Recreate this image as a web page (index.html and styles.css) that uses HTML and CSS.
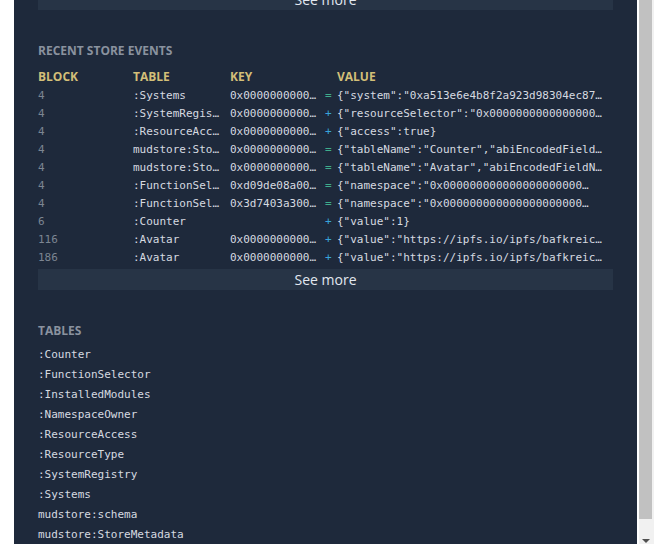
FILE: index.html
```html
<!DOCTYPE html>
<html lang="en">
<head>
<meta charset="utf-8">
<title>Store events</title>
<link rel="stylesheet" href="styles.css">
</head>
<body>
<div class="viewport">
  <div class="panel">
    <button class="see-more see-more-top">See more</button>

    <section class="section">
      <h2 class="section-title">Recent store events</h2>
      <div class="events">
        <div class="ev-head">BLOCK</div><div class="ev-head">TABLE</div><div class="ev-head">KEY</div><div class="ev-head"></div><div class="ev-head">VALUE</div>

        <div class="ev-block">4</div><div class="ev-cell">:Systems</div><div class="ev-cell">0x0000000000…</div><div class="sign eq">=</div><div class="ev-cell">{"system":"0xa513e6e4b8f2a923d98304ec87…</div>
        <div class="ev-block">4</div><div class="ev-cell">:SystemRegis…</div><div class="ev-cell">0x0000000000…</div><div class="sign plus">+</div><div class="ev-cell">{"resourceSelector":"0x0000000000000000…</div>
        <div class="ev-block">4</div><div class="ev-cell">:ResourceAcc…</div><div class="ev-cell">0x0000000000…</div><div class="sign plus">+</div><div class="ev-cell">{"access":true}</div>
        <div class="ev-block">4</div><div class="ev-cell">mudstore:Sto…</div><div class="ev-cell">0x0000000000…</div><div class="sign eq">=</div><div class="ev-cell">{"tableName":"Counter","abiEncodedField…</div>
        <div class="ev-block">4</div><div class="ev-cell">mudstore:Sto…</div><div class="ev-cell">0x0000000000…</div><div class="sign eq">=</div><div class="ev-cell">{"tableName":"Avatar","abiEncodedFieldN…</div>
        <div class="ev-block">4</div><div class="ev-cell">:FunctionSel…</div><div class="ev-cell">0xd09de08a00…</div><div class="sign eq">=</div><div class="ev-cell">{"namespace":"0x000000000000000000000…</div>
        <div class="ev-block">4</div><div class="ev-cell">:FunctionSel…</div><div class="ev-cell">0x3d7403a300…</div><div class="sign eq">=</div><div class="ev-cell">{"namespace":"0x000000000000000000000…</div>
        <div class="ev-block">6</div><div class="ev-cell">:Counter</div><div class="ev-cell"></div><div class="sign plus">+</div><div class="ev-cell">{"value":1}</div>
        <div class="ev-block">116</div><div class="ev-cell">:Avatar</div><div class="ev-cell">0x0000000000…</div><div class="sign plus">+</div><div class="ev-cell">{"value":"https://ipfs.io/ipfs/bafkreic…</div>
        <div class="ev-block">186</div><div class="ev-cell">:Avatar</div><div class="ev-cell">0x0000000000…</div><div class="sign plus">+</div><div class="ev-cell">{"value":"https://ipfs.io/ipfs/bafkreic…</div>
      </div>
      <button class="see-more">See more</button>
    </section>

    <section class="section">
      <h2 class="section-title">Tables</h2>
      <ul class="tables">
        <li>:Counter</li>
        <li>:FunctionSelector</li>
        <li>:InstalledModules</li>
        <li>:NamespaceOwner</li>
        <li>:ResourceAccess</li>
        <li>:ResourceType</li>
        <li>:SystemRegistry</li>
        <li>:Systems</li>
        <li>mudstore:schema</li>
        <li>mudstore:StoreMetadata</li>
      </ul>
    </section>
  </div>
</div>
<div class="scrollbar">
  <div class="thumb"></div>
  <div class="track"></div>
  <div class="arrow"></div>
</div>
</body>
</html>
```

FILE: styles.css
```css
html, body {
  margin: 0;
  padding: 0;
  height: 544px;
  overflow: hidden;
  background: #ffffff;
}

body {
  display: flex;
  font-family: "Open Sans", "Liberation Sans", sans-serif;
}

.viewport {
  flex: 1;
  padding-left: 14px;
  height: 544px;
  overflow: hidden;
}

.panel {
  background: #1e293b;
  padding: 0 24px;
  min-height: 600px;
  display: flex;
  flex-direction: column;
}

.see-more {
  display: block;
  width: 100%;
  height: 21px;
  border: 0;
  margin: 0;
  padding: 0;
  background: #273446;
  color: #e2e8f0;
  font-family: "Open Sans", "Liberation Sans", sans-serif;
  font-size: 14px;
  line-height: 21px;
  text-align: center;
}

.see-more-top {
  margin-top: -11px;
}

.section {
  margin-top: 33px;
}

.section-title {
  margin: 0;
  font-size: 12px;
  line-height: 16px;
  font-weight: 700;
  text-transform: uppercase;
  color: #8a929f;
}

.events {
  display: grid;
  grid-template-columns: 95px 97px 95px 12px 1fr;
  margin-top: 8px;
  font-family: "DejaVu Sans Mono", "Liberation Mono", monospace;
  font-size: 11px;
  line-height: 18px;
  margin-bottom: 2px;
}

.ev-head {
  font-family: "Open Sans", "Liberation Sans", sans-serif;
  font-weight: 700;
  font-size: 12px;
  line-height: 20px;
  color: #d3bf78;
}

.ev-block {
  color: #7c8592;
  white-space: nowrap;
}

.ev-cell {
  color: #d6dae0;
  white-space: nowrap;
  overflow: hidden;
}

.sign {
  white-space: nowrap;
}

.sign.eq {
  color: #3fae8c;
}

.sign.plus {
  color: #38a3dc;
}

.tables {
  list-style: none;
  margin: 6px 0 0;
  padding: 0;
  font-family: "DejaVu Sans Mono", "Liberation Mono", monospace;
  font-size: 11px;
  line-height: 20px;
  color: #d6dae0;
}

.scrollbar {
  width: 17px;
  height: 544px;
  background: #f1f1f1;
  border-left: 2px solid #ffffff;
  box-sizing: border-box;
  display: flex;
  flex-direction: column;
  align-items: center;
}

.thumb {
  width: 13px;
  height: 519px;
  background: #c1c1c1;
  margin-right: 2px;
}

.track {
  flex: 1;
}

.arrow {
  width: 0;
  height: 0;
  border-left: 4px solid transparent;
  border-right: 4px solid transparent;
  border-top: 4px solid #505050;
  margin-bottom: 1px;
  margin-right: 2px;
}
```
